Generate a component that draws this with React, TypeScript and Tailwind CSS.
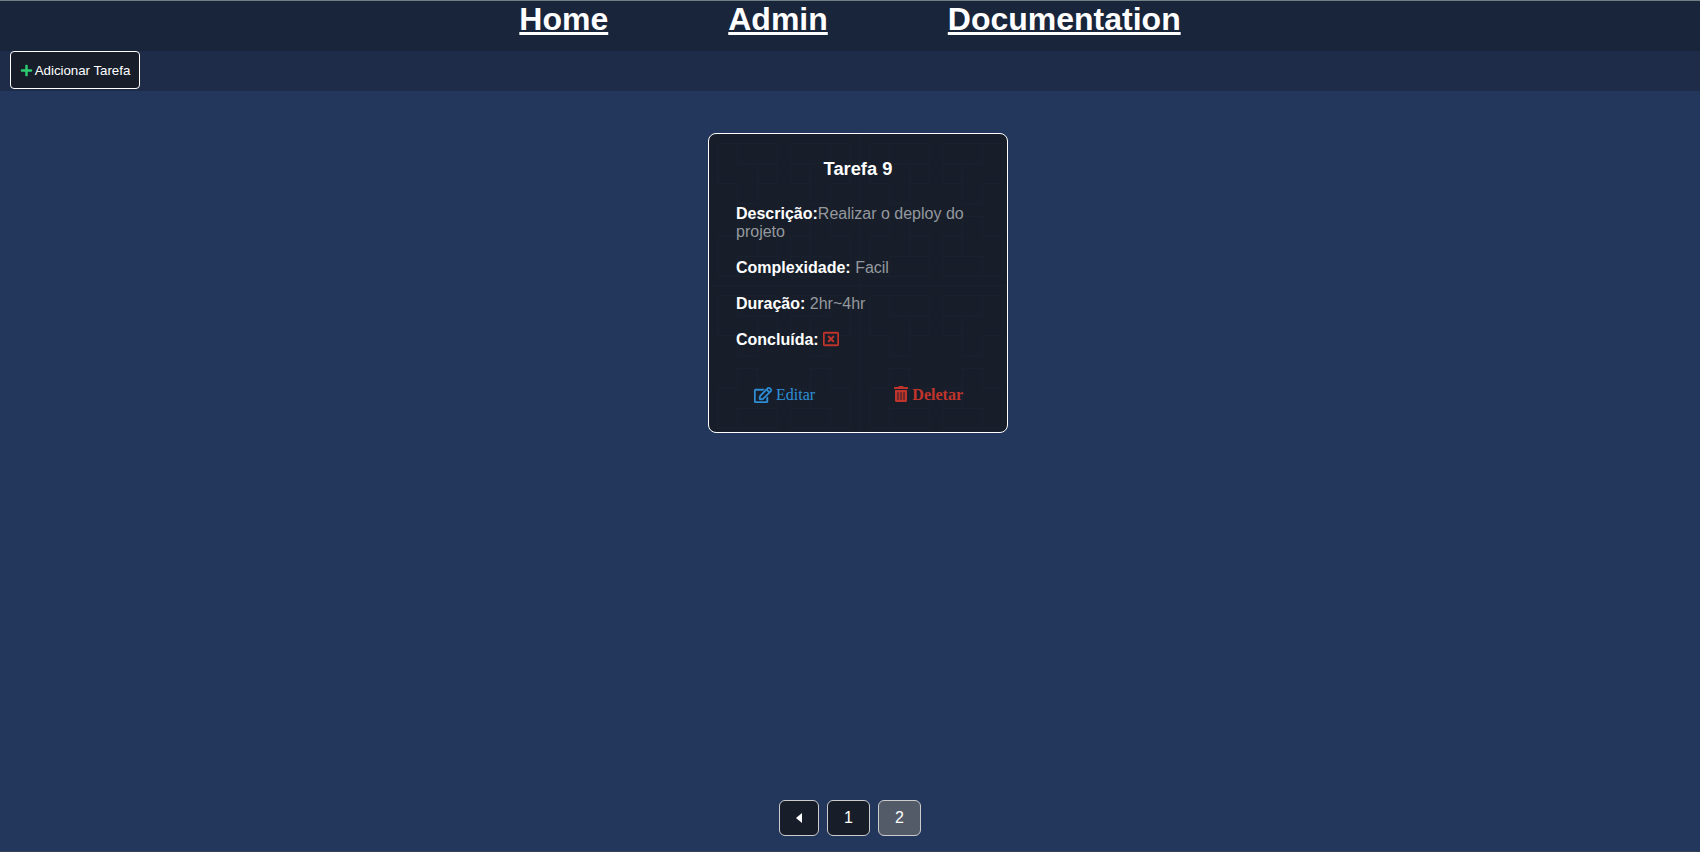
import { FaPlus, FaRegEdit, FaRegWindowClose, FaTrashAlt } from "react-icons/fa";

const links = ["Home", "Admin", "Documentation"];

function CardPattern() {
  return (
    <svg className="absolute inset-0 h-full w-full" aria-hidden="true">
      <defs>
        <g id="block" fill="none" stroke="#19212e">
          <path d="M.5 .5h60v40h-20v20h-20v-20h-20zM20.5 .5v20h40M40.5 20.5v20" />
        </g>
        <pattern id="blocks" x="8" y="9" width="152" height="152" patternUnits="userSpaceOnUse">
          <use href="#block" />
          <use href="#block" transform="matrix(-1 0 0 1 134 0)" />
          <use href="#block" transform="matrix(1 0 0 -1 0 134)" />
          <use href="#block" transform="matrix(-1 0 0 -1 134 134)" />
          <path d="M0 142.500h152M142.500 0v152" stroke="#19212e" />
        </pattern>
      </defs>
      <rect width="100%" height="100%" fill="url(#blocks)" />
    </svg>
  );
}

export default function App() {
  return (
    <div className="flex h-[852px] flex-col border-t border-b border-t-[#6f7f86] border-b-[#35415a] bg-[#23365c] font-['Liberation_Sans',Arial,sans-serif] text-base leading-[18px] text-white">
      <nav className="flex h-[50px] shrink-0 justify-center gap-[120px] bg-[#19253b] text-[32px] leading-[36px] font-bold">
        {links.map((link) => (
          <a key={link} href="#" className="underline">{link}</a>
        ))}
      </nav>

      <div className="h-10 shrink-0 bg-[#1e2c49] pl-[10px]">
        <button className="flex h-[38px] w-[130px] items-center justify-center gap-0.5 rounded-[4px] border border-white bg-[#171e2a] pt-px text-[13.333px] tracking-[-0.03px]">
          <FaPlus className="size-[13px] text-[#2ecc71]" />
          Adicionar Tarefa
        </button>
      </div>

      <main className="flex grow justify-center pt-[42px] pl-4">
        <article className="relative size-[300px] overflow-hidden rounded-lg border border-white bg-[#171e2a] px-[27px] pt-6">
          <CardPattern />
          <div className="relative">
            <h3 className="text-center text-[18.3px] leading-[21px] font-bold">Tarefa 9</h3>
            <div className="mt-[26px] flex flex-col gap-[18px] text-[#95999e]">
              <p><strong className="text-white">Descrição:</strong>Realizar o deploy do projeto</p>
              <p><strong className="text-white">Complexidade:</strong> Facil</p>
              <p><strong className="text-white">Duração:</strong> 2hr~4hr</p>
              <p className="flex items-center gap-1">
                <strong className="text-white">Concluída:</strong>
                <FaRegWindowClose className="mb-0.5 size-4 text-[#c0342b]" stroke="currentColor" strokeWidth={14} />
              </p>
            </div>
            <div className="mt-[37px] flex justify-between pr-[17px] pl-[18px] font-['Liberation_Serif',serif]">
              <button className="flex items-center gap-1 text-[#2f8fd8]">
                <FaRegEdit className="mb-px h-4 w-[18px]" stroke="currentColor" strokeWidth={14} />
                Editar
              </button>
              <button className="flex items-center gap-1 font-bold text-[#c0342b]">
                <FaTrashAlt className="mb-0.5 h-4 w-[14px]" />
                Deletar
              </button>
            </div>
          </div>
        </article>
      </main>

      <footer className="mb-[15px] flex shrink-0 justify-center gap-2">
        <button className="flex h-9 w-10 items-center justify-center rounded-md border border-[#cccccc] bg-[#171e2a]" aria-label="Anterior">
          <svg className="mb-px h-[10px] w-[6px]" viewBox="0 0 6 10"><path d="M6 0v10L0 5z" fill="white" /></svg>
        </button>
        <button className="h-9 w-[43px] rounded-md border border-[#cccccc] bg-[#171e2a]">1</button>
        <button className="h-9 w-[43px] rounded-md border border-[#cccccc] bg-[#535a68]">2</button>
      </footer>
    </div>
  );
}
